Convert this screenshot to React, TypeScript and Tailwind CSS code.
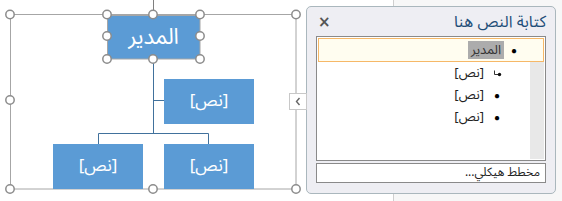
import React from "react";

const ar = { fontFamily: "'Noto Sans Arabic', 'DejaVu Sans', 'Noto Sans', sans-serif" };

function Node({ x, y, w, h, label, big }: { x: number; y: number; w: number; h: number; label: string; big?: boolean }) {
  return (
    <div
      className={`absolute flex items-center justify-center bg-[#5b9bd5] text-white ${big ? "text-[22px]" : "text-[17px]"}`}
      style={{ left: x, top: y, width: w, height: h, ...ar }}
      dir="rtl"
    >
      {label}
    </div>
  );
}

const handles: [number, number][] = [
  [10, 14.5], [153, 14.5], [296, 14.5], [10, 100], [296, 100], [10, 189], [153, 189], [296, 189],
  [107, 14.5], [200, 14.5], [107, 36], [200, 36], [107, 59], [153, 59], [200, 59],
];

function Diagram() {
  return (
    <div className="relative h-[201px] w-[306px] shrink-0">
      <svg className="absolute left-0 top-0" width={306} height={201}>
        <line x1={153.5} y1={0} x2={153.5} y2={14} stroke="#7f7f7f" strokeWidth={1} />
        <rect x={10.5} y={14.5} width={285.5} height={174.5} fill="none" stroke="#a6a6a6" strokeWidth={1} />
        <g stroke="#41719c" strokeWidth={1} fill="none">
          <line x1={153.5} y1={59} x2={153.5} y2={133.5} />
          <line x1={153.5} y1={100.5} x2={164} y2={100.5} />
          <line x1={98.5} y1={133.5} x2={208.5} y2={133.5} />
          <line x1={98.5} y1={133.5} x2={98.5} y2={144} />
          <line x1={208.5} y1={133.5} x2={208.5} y2={144} />
        </g>
      </svg>
      <Node x={107} y={15} w={93} h={44} label="المدير" big />
      <Node x={164} y={79} w={90} h={45} label="[نص]" />
      <Node x={53} y={144} w={90} h={45} label="[نص]" />
      <Node x={164} y={144} w={90} h={45} label="[نص]" />
      <svg className="absolute left-0 top-0" width={306} height={201}>
        <rect x={107.5} y={15.5} width={92.5} height={43.5} fill="none" stroke="#a6a6a6" strokeWidth={1} />
        {handles.map(([cx, cy], i) => (
          <circle key={i} cx={cx} cy={cy} r={4.2} fill="#ffffff" stroke="#8c8c8c" strokeWidth={1.5} />
        ))}
      </svg>
      <div className="absolute left-[289px] top-[93px] flex h-[17px] w-[18px] items-center justify-center border border-[#c8c8c8] bg-white">
        <svg width={6} height={9} viewBox="0 0 6 9">
          <path d="M4.5 1 L1.5 4.5 L4.5 8" stroke="#666" strokeWidth={1.4} fill="none" />
        </svg>
      </div>
    </div>
  );
}

function Row({ text, bullet, assistant, highlight }: { text: string; bullet?: boolean; assistant?: boolean; highlight?: boolean }) {
  return (
    <div className="flex h-[22px] items-center" dir="rtl">
      <span className="flex w-[14px] justify-center text-[10px] leading-none text-black">
        {assistant ? (
          <svg width={9} height={7} viewBox="0 0 9 7">
            <path d="M1.5 0.5 V4.5 H6.5" stroke="#333" strokeWidth={1} fill="none" />
            <circle cx={6.5} cy={4.5} r={1.7} fill="#111" />
          </svg>
        ) : bullet ? "●" : null}
      </span>
      <span
        className={`ms-[3px] px-[3px] text-[13px] leading-[18px] ${highlight ? "bg-[#acacac] text-[#333]" : "text-[#222]"}`}
        style={ar}
      >
        {text}
      </span>
    </div>
  );
}

function Pane() {
  return (
    <div className="mt-[6px] flex h-[188px] w-[250px] shrink-0 flex-col rounded-[5px] border border-[#aab7bd] bg-[#eeeef3] px-[9px] pt-[3px]">
      <div className="flex h-[24px] items-center justify-between">
        <span className="ms-[2px] text-[15px] font-bold leading-none text-[#555]" style={{ fontFamily: "'DejaVu Sans', sans-serif" }}>×</span>
        <span className="text-[16px] leading-none text-[#1f4e79]" style={ar} dir="rtl">كتابة النص هنا</span>
      </div>
      <div className="mt-[2px] flex h-[125px] flex-col border border-[#8a8a8a] bg-white p-[1px]">
        <div className="flex h-[24px] items-center border border-[#f6b868] bg-[#fffdf0] ps-[22px]" dir="rtl">
          <Row text="المدير" bullet highlight />
        </div>
        <div className="flex flex-1">
          <div className="flex flex-1 flex-col ps-[26px]" dir="rtl">
            <Row text="[نص]" assistant />
            <Row text="[نص]" bullet />
            <Row text="[نص]" bullet />
          </div>
          <div className="w-[14px] bg-[#e8e8e8]" />
        </div>
      </div>
      <div className="mt-[2px] flex h-[20px] items-center border border-[#8a8a8a] bg-white px-[5px] text-[12px] text-[#222]" style={ar} dir="rtl">
        <span>مخطط هيكلي...</span>
      </div>
    </div>
  );
}

export default function App() {
  return (
    <div className="relative h-[201px] w-[562px] overflow-hidden bg-white">
      <div className="absolute left-[393px] top-0 h-full w-[169px] border-l border-[#cfcfcf] bg-[#f7f7f7]" />
      <div className="relative flex">
        <Diagram />
        <Pane />
      </div>
    </div>
  );
}
